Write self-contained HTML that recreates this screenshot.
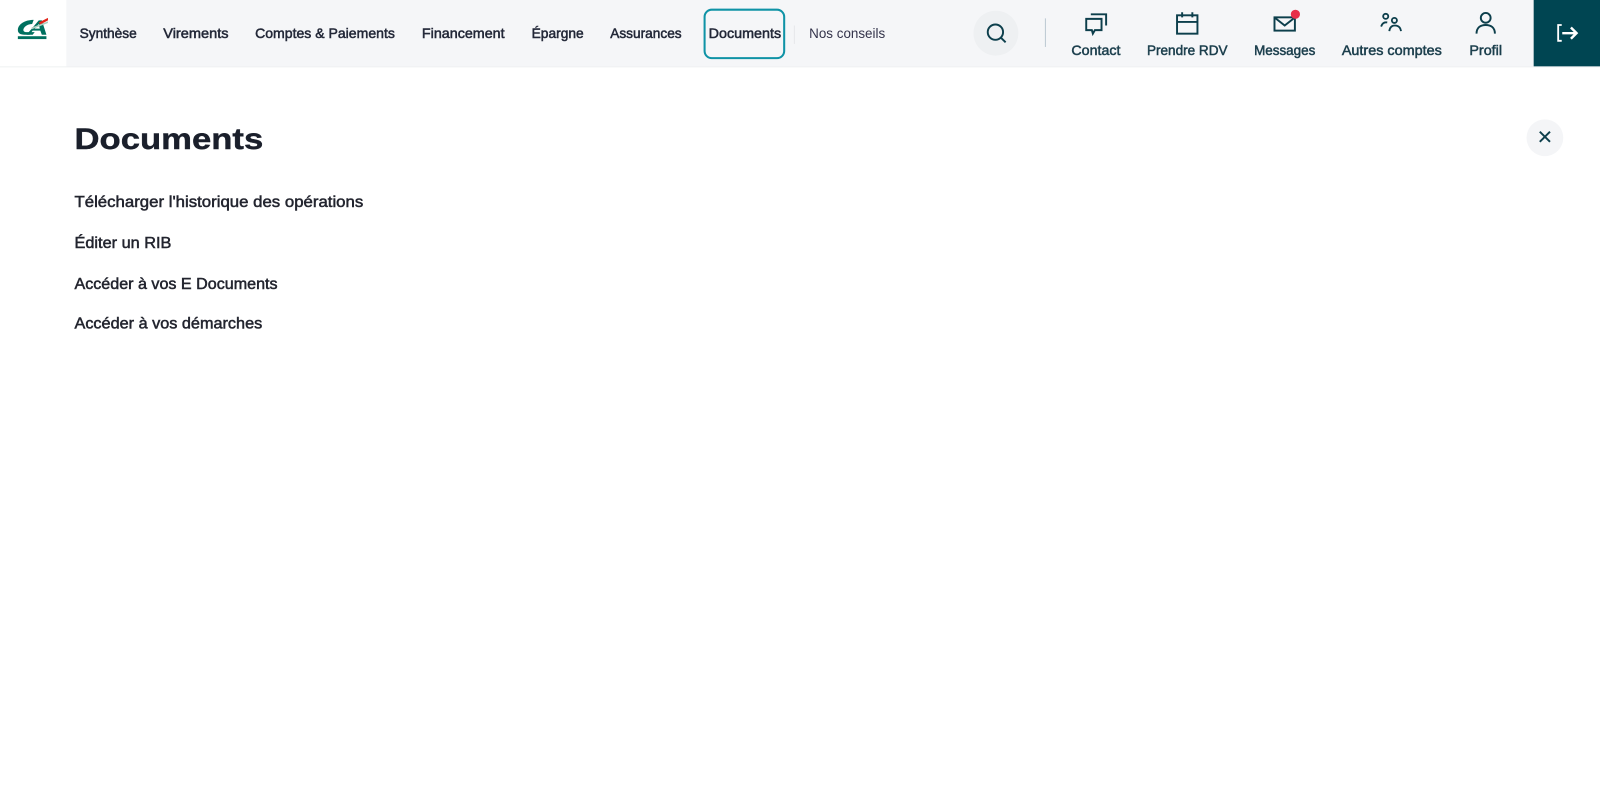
<!DOCTYPE html>
<html lang="fr"><head><meta charset="utf-8"><title>Documents</title>
<style>
html,body{margin:0;padding:0;background:#fff;width:1600px;height:800px;overflow:hidden}
svg{display:block}
text{font-family:"Liberation Sans",sans-serif}
.n{font-size:13.7px;fill:#232838;stroke:#232838;stroke-width:.5px}
.l{font-size:13.7px;fill:#1c3f4d;stroke:#1c3f4d;stroke-width:.5px}
.a{font-size:15.7px;fill:#23252f;stroke:#23252f;stroke-width:.5px}
.i{fill:none;stroke:#0d3f4c;stroke-width:1.900}
.u{fill:none;stroke:#0d3f4c;stroke-width:1.800}
</style></head><body>
<svg width="1600" height="800" viewBox="0 0 1568 784" xmlns="http://www.w3.org/2000/svg">
<rect width="1568" height="784" fill="#fff"/>
<rect x="0" y="0" width="1568" height="65" fill="#f5f6f8"/>
<rect x="0" y="65" width="1568" height="1" fill="#eeeff1"/>
<rect x="0" y="0" width="65" height="65" fill="#fff"/>
<!-- logo -->
<path d="M33 19.500C24 19.500 17.500 24 17.500 29.500C17.500 32.500 20 34 24 34L32 34L34 31.500L26 31.500C23.500 31.500 22.500 30 23 28.500C24 25.500 28 23.500 31.500 23.500Z" fill="#00705f"/>
<path d="M38 20L41 20L45.500 34L41 34L39.500 30L32 30L29 34L26 34ZM38 23.500L34 28L39 28Z" fill="#00705f"/>
<path d="M38 22L47 17.500L47 20L39.500 24Z" fill="#e2231a"/>
<path d="M31 27L47 21L47 22.500L31 28.800Z" fill="#a9cfc0"/>
<rect x="17.500" y="35.500" width="28" height="2.800" fill="#00705f"/>
<!-- nav -->
<text class="n" x="78" y="37" textLength="56" lengthAdjust="spacingAndGlyphs">Synthèse</text>
<text class="n" x="160" y="37" textLength="64" lengthAdjust="spacingAndGlyphs">Virements</text>
<text class="n" x="250" y="37" textLength="137" lengthAdjust="spacingAndGlyphs">Comptes &amp; Paiements</text>
<text class="n" x="413.500" y="37" textLength="81" lengthAdjust="spacingAndGlyphs">Financement</text>
<text class="n" x="521" y="37" textLength="51" lengthAdjust="spacingAndGlyphs">Épargne</text>
<text class="n" x="598" y="37" textLength="70" lengthAdjust="spacingAndGlyphs">Assurances</text>
<rect x="690.500" y="9.500" width="78" height="47.500" rx="7" fill="none" stroke="#0f93a6" stroke-width="2"/>
<text class="n" x="694.500" y="37" textLength="71" lengthAdjust="spacingAndGlyphs">Documents</text>
<rect x="778" y="25" width="1" height="18" fill="#e6e8ea"/>
<text x="793" y="37" textLength="74.500" lengthAdjust="spacingAndGlyphs" style="font-size:13.7px;fill:#33334a">Nos conseils</text>
<!-- search -->
<circle cx="976" cy="32.500" r="22" fill="#eef0f2"/>
<circle cx="975.500" cy="31.500" r="7.500" class="i"/>
<path d="M981 37L985.500 41.500" class="i"/>
<rect x="1024" y="18" width="1" height="28" fill="#bcc8d2"/>
<!-- contact -->
<path d="M1064.500 18.500H1079.500V29.500H1073L1071 33L1070 29.500H1064.500Z" class="i"/>
<path d="M1069 14H1084V25" class="i"/>
<text class="l" x="1050" y="54" textLength="48" lengthAdjust="spacingAndGlyphs">Contact</text>
<!-- calendar -->
<rect x="1153.500" y="15" width="20" height="18" class="i"/>
<path d="M1153.500 21.500H1173.500M1158.500 12V17M1168.500 12V17" class="i"/>
<text class="l" x="1124" y="54" textLength="79" lengthAdjust="spacingAndGlyphs">Prendre RDV</text>
<!-- messages -->
<rect x="1249" y="17" width="20" height="13" class="i"/>
<path d="M1249.500 17.500L1259 25L1268.500 17.500" class="i"/>
<circle cx="1269.500" cy="14" r="4.500" fill="#e8304a"/>
<text class="l" x="1229" y="54" textLength="60" lengthAdjust="spacingAndGlyphs">Messages</text>
<!-- others -->
<circle cx="1358" cy="16" r="2.500" class="u"/>
<circle cx="1366.500" cy="20" r="2.500" class="u"/>
<path d="M1353.500 26C1354.500 23 1356.500 21.500 1359.500 22" class="u"/>
<path d="M1361.500 30.500C1362 27 1364 25 1367 25C1370.500 25 1372.500 27 1373 30.500" class="u"/>
<text class="l" x="1315" y="54" textLength="98" lengthAdjust="spacingAndGlyphs">Autres comptes</text>
<!-- profile -->
<circle cx="1456" cy="17.500" r="4.800" class="i"/>
<path d="M1447 33C1447 27 1451 24.500 1456 24.500C1461 24.500 1465 27 1465 33" class="i"/>
<text class="l" x="1440" y="54" textLength="32" lengthAdjust="spacingAndGlyphs">Profil</text>
<!-- logout -->
<rect x="1503" y="0" width="65" height="65" fill="#004552"/>
<path d="M1530.500 24.500H1527V40H1530.500" fill="none" stroke="#fff" stroke-width="1.800"/>
<path d="M1531 32.500H1545M1539.500 27L1545 32.500L1539.500 38" fill="none" stroke="#fff" stroke-width="2.400"/>
<!-- content -->
<text x="73" y="146" textLength="185" lengthAdjust="spacingAndGlyphs" style="font-size:29px;font-weight:700;fill:#1a1f2b;stroke:#1a1f2b;stroke-width:.4px">Documents</text>
<text class="a" x="73" y="203" textLength="283" lengthAdjust="spacingAndGlyphs">Télécharger l'historique des opérations</text>
<text class="a" x="73" y="243" textLength="95" lengthAdjust="spacingAndGlyphs">Éditer un RIB</text>
<text class="a" x="73" y="283" textLength="199" lengthAdjust="spacingAndGlyphs">Accéder à vos E Documents</text>
<text class="a" x="73" y="322" textLength="184" lengthAdjust="spacingAndGlyphs">Accéder à vos démarches</text>
<!-- close -->
<circle cx="1514" cy="135" r="18" fill="#f4f5f7"/>
<path d="M1509 129L1519 139M1519 129L1509 139" class="i"/>
</svg>
</body></html>
